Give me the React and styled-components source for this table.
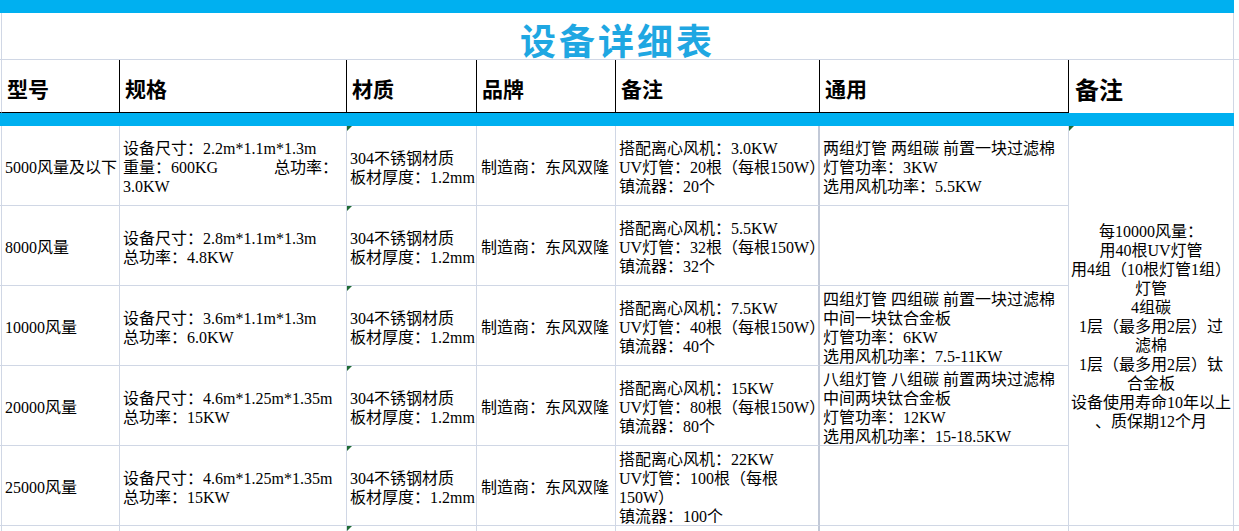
import React from "react";
import styled, { createGlobalStyle, css } from "styled-components";

const GRID = "#d0d7e5";
const CYAN = "#00b0f0";
const BODY_FONT = `"Liberation Serif", "Noto Sans CJK SC", serif`;
const HEAD_FONT = `"Noto Sans CJK SC", "Noto Sans", sans-serif`;

const GlobalStyle = createGlobalStyle`
  html, body { margin: 0; padding: 0; background: #fff; }
  body { font-family: ${BODY_FONT}; color: #000; }
  * { box-sizing: border-box; }
`;

const Sheet = styled.div`
  display: grid;
  grid-template-columns: 2px 118px 227px 130px 139px 204px 249px 165px 5px;
  grid-template-rows: 13px 47px 53px 13px repeat(5, 80px) 40px;
  width: 1239px;
  height: 531px;
  overflow: hidden;
`;

const Band = styled.div`
  grid-column: 1 / 9;
  background: ${CYAN};
`;

const Tail = styled.div`
  border-bottom: 1px solid ${GRID};
  ${(p) => p.$span && css`grid-row: span ${p.$span};`}
  ${(p) => p.$plain && css`border-bottom: none;`}
`;

const Edge = styled.div`
  border-right: 1px solid ${GRID};
  border-bottom: 1px solid ${(p) => (p.$dark ? "#000" : GRID)};
`;

const Title = styled.div`
  grid-column: 2 / 9;
  display: flex;
  align-items: center;
  justify-content: center;
  padding-top: 5px;
  border-right: 1px solid ${GRID};
  border-bottom: 1px solid ${GRID};
  font-family: ${HEAD_FONT};
  font-weight: 700;
  font-size: 36px;
  letter-spacing: 3px;
  color: #1fa7e2;
`;

const HeadCell = styled.div`
  display: flex;
  align-items: center;
  padding: 4px 0 0 ${(p) => (p.$big ? 6 : 5)}px;
  border-right: 1px solid ${(p) => (p.$big ? GRID : "#000")};
  border-bottom: ${(p) => (p.$big ? "none" : "1px solid #000")};
  font-family: ${HEAD_FONT};
  font-weight: 700;
  font-size: ${(p) => (p.$big ? 24 : 21)}px;
  white-space: nowrap;
`;

const markCss = css`
  &::before {
    content: "";
    position: absolute;
    left: 0;
    top: 0;
    border-top: 5px solid #1e6b34;
    border-right: 5px solid transparent;
  }
`;

const Cell = styled.div`
  position: relative;
  display: flex;
  flex-direction: column;
  justify-content: center;
  padding: 4px 0 0 ${(p) => p.$pad ?? 3}px;
  border-right: ${(p) => (p.$thick ? `2px solid #c2c9d7` : `1px solid ${GRID}`)};
  border-bottom: 1px solid ${GRID};
  font-size: 16px;
  line-height: 19px;
  white-space: nowrap;
  ${(p) => p.$mark && markCss}
`;

const MergedNote = styled(Cell)`
  grid-row: span 5;
  align-items: center;
  text-align: center;
  padding: 2px 0 0;
`;

const Line = styled.div`
  white-space: nowrap;
`;

const SplitLine = styled.div`
  display: flex;
  justify-content: space-between;
  padding-right: 8px;
  white-space: nowrap;
`;

const rows = [
  {
    model: "5000风量及以下",
    spec: ["设备尺寸：2.2m*1.1m*1.3m", ["重量：600KG", "总功率："], "3.0KW"],
    note: ["搭配离心风机：3.0KW", "UV灯管：20根（每根150W）", "镇流器：20个"],
    general: ["两组灯管 两组碳 前置一块过滤棉", "灯管功率：3KW", "选用风机功率：5.5KW"],
  },
  {
    model: "8000风量",
    spec: ["设备尺寸：2.8m*1.1m*1.3m", "总功率：4.8KW"],
    note: ["搭配离心风机：5.5KW", "UV灯管：32根（每根150W）", "镇流器：32个"],
    general: [],
  },
  {
    model: "10000风量",
    spec: ["设备尺寸：3.6m*1.1m*1.3m", "总功率：6.0KW"],
    note: ["搭配离心风机：7.5KW", "UV灯管：40根（每根150W）", "镇流器：40个"],
    general: ["四组灯管 四组碳 前置一块过滤棉", "中间一块钛合金板", "灯管功率：6KW", "选用风机功率：7.5-11KW"],
  },
  {
    model: "20000风量",
    spec: ["设备尺寸：4.6m*1.25m*1.35m", "总功率：15KW"],
    note: ["搭配离心风机：15KW", "UV灯管：80根（每根150W）", "镇流器：80个"],
    general: ["八组灯管 八组碳 前置两块过滤棉", "中间两块钛合金板", "灯管功率：12KW", "选用风机功率：15-18.5KW"],
  },
  {
    model: "25000风量",
    spec: ["设备尺寸：4.6m*1.25m*1.35m", "总功率：15KW"],
    note: ["搭配离心风机：22KW", "UV灯管：100根（每根", "150W）", "镇流器：100个"],
    general: [],
  },
];

const mergedLines = [
  "每10000风量：",
  "用40根UV灯管",
  "用4组（10根灯管1组）",
  "灯管",
  "4组碳",
  "1层（最多用2层）过",
  "滤棉",
  "1层（最多用2层）钛",
  "合金板",
  "设备使用寿命10年以上",
  "、质保期12个月",
];

const Lines = ({ items }) =>
  items.map((l, i) =>
    Array.isArray(l) ? (
      <SplitLine key={i}>
        <span>{l[0]}</span>
        <span>{l[1]}</span>
      </SplitLine>
    ) : (
      <Line key={i}>{l}</Line>
    )
  );

const headers = ["型号", "规格", "材质", "品牌", "备注", "通用"];

export default function App() {
  return (
    <>
      <GlobalStyle />
      <Sheet>
        <Band />
        <Tail $plain />

        <Edge />
        <Title>设备详细表</Title>
        <Tail />

        <Edge $dark />
        {headers.map((h) => (
          <HeadCell key={h}>{h}</HeadCell>
        ))}
        <HeadCell $big>备注</HeadCell>
        <Tail $plain />

        <Band />
        <Tail $plain />

        {rows.map((r, i) => (
          <React.Fragment key={r.model}>
            <Edge />
            <Cell>{r.model}</Cell>
            <Cell>
              <Lines items={r.spec} />
            </Cell>
            <Cell $mark>
              <Line>304不锈钢材质</Line>
              <Line>板材厚度：1.2mm</Line>
            </Cell>
            <Cell $pad={4}>制造商：东风双隆</Cell>
            <Cell $thick>
              <Lines items={r.note} />
            </Cell>
            <Cell>
              <Lines items={r.general} />
            </Cell>
            {i === 0 && (
              <>
                <MergedNote $mark>
                  <Lines items={mergedLines} />
                </MergedNote>
                <Tail $span={5} />
              </>
            )}
          </React.Fragment>
        ))}

        <Edge />
        <Cell />
        <Cell />
        <Cell $mark />
        <Cell />
        <Cell $thick />
        <Cell />
        <Cell />
        <Tail />
      </Sheet>
    </>
  );
}
